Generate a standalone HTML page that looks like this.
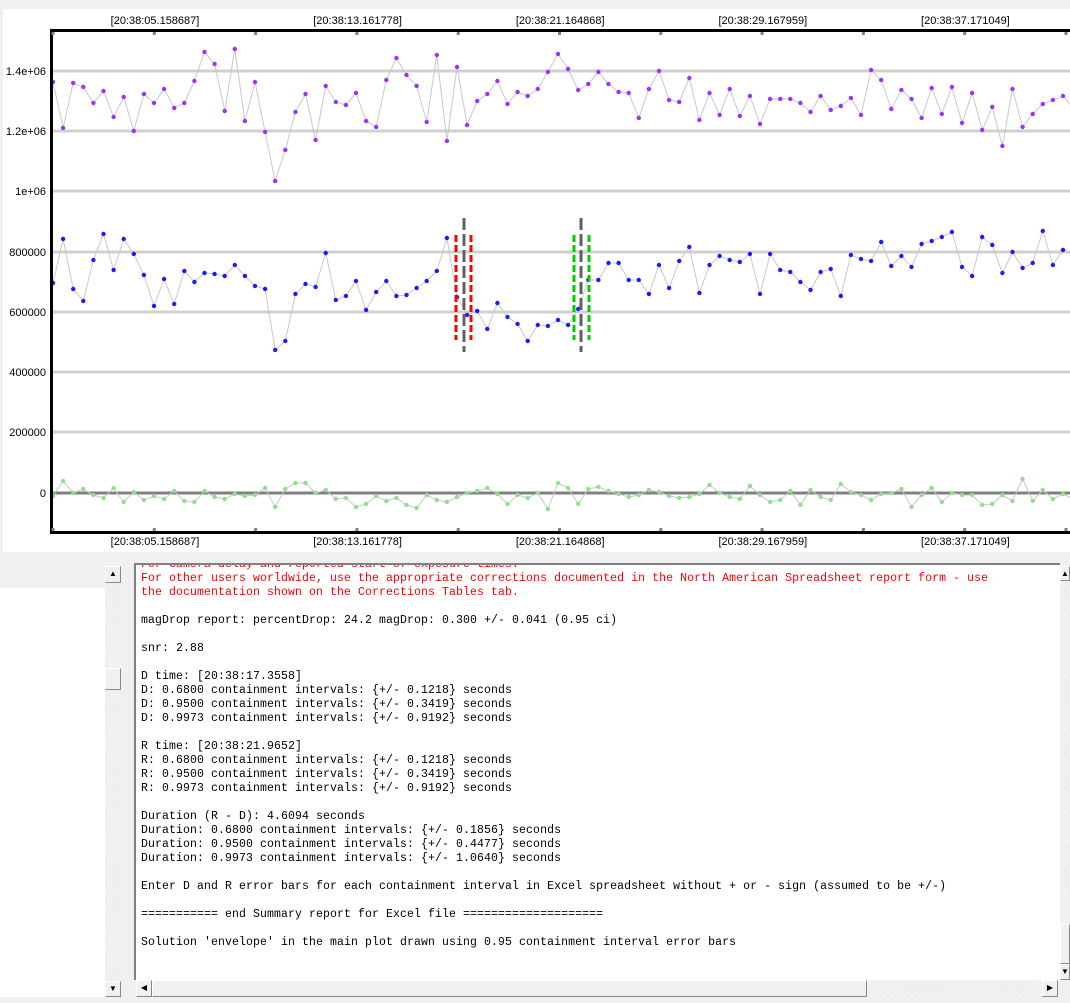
<!DOCTYPE html>
<html><head><style>
body{margin:0;width:1070px;height:1003px;background:#f0f0f0;position:relative;overflow:hidden;font-family:"Liberation Sans",sans-serif}
#plot{position:absolute;left:3px;top:9px;width:1067px;height:543px;background:#fff}
svg{position:absolute;left:0;top:0}
.lbl{font-size:11px;fill:#000}
#left{position:absolute;left:0;top:563px;width:105px;height:434px;background:#fff}
#leftsel{position:absolute;left:0;top:565px;width:105px;height:23px;background:#f0f0f0}
.sb{position:absolute;background:#f4f4f4;background-image:repeating-linear-gradient(45deg,#e8e8e8 0 1px,#f8f8f8 1px 2px)}
.btn{position:absolute;background:#f0f0f0;border:1px solid #fff;border-right-color:#888;border-bottom-color:#888;box-sizing:border-box;font-size:8px;text-align:center;line-height:14px;color:#000}
#txt{position:absolute;left:134px;top:563px;width:926px;height:417px;background:#fff;border-left:2px solid #808080;border-top:2px solid #808080;box-sizing:border-box;overflow:hidden}
pre{margin:0;position:absolute;left:5px;top:-7px;font-family:"Liberation Mono",monospace;font-size:11.5px;line-height:14px;color:#000;letter-spacing:0.1px}
.r{color:#f00}
</style></head><body>
<div id="plot"></div>
<svg width="1070" height="560" id="s"></svg>
<div id="leftsel"></div><div id="left" style="top:588px;height:409px"></div>
<div class="sb" style="left:105px;top:565px;width:16px;height:432px"></div>
<div class="btn" style="left:105px;top:566px;width:16px;height:17px">▲</div>
<div class="btn" style="left:105px;top:668px;width:16px;height:22px"></div>
<div class="btn" style="left:105px;top:981px;width:16px;height:16px">▼</div>
<div id="txt"><pre><span class="r">For Camera delay and reported start of exposure times:
For other users worldwide, use the appropriate corrections documented in the North American Spreadsheet report form - use
the documentation shown on the Corrections Tables tab.</span>

magDrop report: percentDrop: 24.2 magDrop: 0.300 +/- 0.041 (0.95 ci)

snr: 2.88

D time: [20:38:17.3558]
D: 0.6800 containment intervals: {+/- 0.1218} seconds
D: 0.9500 containment intervals: {+/- 0.3419} seconds
D: 0.9973 containment intervals: {+/- 0.9192} seconds

R time: [20:38:21.9652]
R: 0.6800 containment intervals: {+/- 0.1218} seconds
R: 0.9500 containment intervals: {+/- 0.3419} seconds
R: 0.9973 containment intervals: {+/- 0.9192} seconds

Duration (R - D): 4.6094 seconds
Duration: 0.6800 containment intervals: {+/- 0.1856} seconds
Duration: 0.9500 containment intervals: {+/- 0.4477} seconds
Duration: 0.9973 containment intervals: {+/- 1.0640} seconds

Enter D and R error bars for each containment interval in Excel spreadsheet without + or - sign (assumed to be +/-)

=========== end Summary report for Excel file ====================

Solution 'envelope' in the main plot drawn using 0.95 containment interval error bars</pre></div>
<div class="sb" style="left:1060px;top:565px;width:10px;height:415px"></div>
<div class="btn" style="left:1060px;top:566px;width:10px;height:15px">▲</div>
<div class="btn" style="left:1060px;top:924px;width:10px;height:40px"></div>
<div class="btn" style="left:1060px;top:964px;width:10px;height:16px">▼</div>
<div class="sb" style="left:134px;top:980px;width:926px;height:17px"></div>
<div class="btn" style="left:136px;top:980px;width:16px;height:17px">◀</div>
<div class="btn" style="left:152px;top:980px;width:715px;height:17px"></div>
<div class="btn" style="left:1042px;top:980px;width:16px;height:17px">▶</div>
<script>
var s=document.getElementById('s'),h='';
function L(x1,y1,x2,y2,c,w,d){h+='<line x1="'+x1+'" y1="'+y1+'" x2="'+x2+'" y2="'+y2+'" stroke="'+c+'" stroke-width="'+w+'"'+(d?' stroke-dasharray="'+d+'"':'')+'/>';}
var gy=[71,131,191,252,312,372,432],gl=['1.4e+06','1.2e+06','1e+06','800000','600000','400000','200000'];
gy.forEach(function(y,i){L(52,y,1070,y,'#d0d0d0',3);h+='<text class="lbl" x="46" y="'+(y+4)+'" text-anchor="end">'+gl[i]+'</text>';});
L(52,493,1070,493,'#808080',3);h+='<text class="lbl" x="46" y="497" text-anchor="end">0</text>';
var P=[82,128,83,87,103,91,117,97,131,94,103,89,108,103,81,52,64,111,49,121,82,132,181,150,112,94,140,86,102,105,93,121,127,80,58,75,86,122,55,141,67,125,101,94,81,104,92,96,89,72,54,69,90,84,72,84,92,93,118,89,71,100,102,78,120,93,115,89,116,96,124,99,99,99,103,112,96,110,106,98,115,70,80,109,90,99,118,88,114,87,123,93,130,107,146,89,127,114,104,100,96,108];
var B=[283,239,289,301,260,234,270,239,254,275,306,279,304,271,282,273,274,276,265,276,286,289,350,341,294,284,287,253,300,296,281,310,292,281,296,295,288,281,271,238,297,315,311,329,303,317,324,341,325,326,320,325,309,280,280,263,263,280,280,294,265,288,261,247,293,265,256,260,262,254,294,254,270,272,282,290,272,269,296,255,259,261,242,266,256,267,244,241,237,232,267,276,237,245,273,252,268,263,231,265,250,255];
var G=[-3,12,0,4,-2,-5,5,-9,1,-7,-3,-6,2,-8,-9,2,-4,-6,-1,-3,-2,5,-14,4,10,10,0,3,-6,-5,-14,-11,-3,-8,-5,-12,-15,-2,-7,-9,-4,0,2,5,-1,-11,-2,-5,0,-16,10,5,-11,4,6,2,-1,-4,-2,3,1,-3,-5,-4,-1,8,0,-4,-6,7,-2,-9,-7,2,-12,3,-4,-7,9,1,-2,-7,-1,0,4,-14,-2,5,-9,0,-2,-2,-12,-11,-2,-8,14,-8,3,-6,-1,-6].map(function(v){return -v;});
function ser(a,base,c){var pts=a.map(function(v,i){return (53+i*10.1).toFixed(1)+','+(base+v)}).join(' ');h+='<polyline points="'+pts+'" fill="none" stroke="#c8c8c8" stroke-width="1"/>';a.forEach(function(v,i){h+='<circle cx="'+(53+i*10.1).toFixed(1)+'" cy="'+(base+v)+'" r="2.2" fill="'+c+'"/>';});}
ser(P,0,'#9b30ff');ser(B,0,'#1a1aff');ser(G,493,'#8fdf8f');
L(456,235,456,340,'#f00',3,'7,3');L(471,235,471,340,'#f00',3,'7,3');
L(464,218,464,352,'#606060',3,'12,4');L(581,218,581,352,'#606060',3,'12,4');
L(574,235,574,340,'#0c0',3,'7,3');L(589,235,589,340,'#0c0',3,'7,3');
h+='<rect x="51.5" y="30.5" width="1030" height="502" fill="none" stroke="#000" stroke-width="3"/>';
for(var i=0;i<11;i++){var x=53+i*101.3;L(x,32,x,35,'#808080',3);L(x,528,x,531,'#808080',3);}
var t=['[20:38:05.158687]','[20:38:13.161778]','[20:38:21.164868]','[20:38:29.167959]','[20:38:37.171049]'];
t.forEach(function(s1,i){var x=155+i*202.6;h+='<text class="lbl" x="'+x+'" y="24" text-anchor="middle">'+s1+'</text><text class="lbl" x="'+x+'" y="545" text-anchor="middle">'+s1+'</text>';});
s.innerHTML=h;
</script>
</body></html>
